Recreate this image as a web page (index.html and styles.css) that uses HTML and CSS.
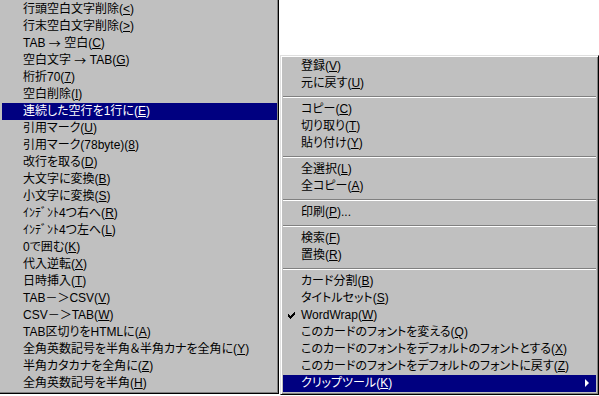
FILE: index.html
```html
<!DOCTYPE html>
<html lang="ja">

<head>
  <meta charset="UTF-8" />
  <title>Menu</title>
  <link rel="stylesheet" href="styles.css">
</head>

<body>
  <div class="desk">
    <!-- Submenu: text tools -->
    <ul class="menu menu-sub">
      <li class="item">行頭空白文字削除(<u>&lt;</u>)</li>
      <li class="item">行末空白文字削除(<u>&gt;</u>)</li>
      <li class="item">TAB&nbsp;<span class="sym">→</span>&nbsp;空白(<u>C</u>)</li>
      <li class="item">空白文字&nbsp;<span class="sym">→</span>&nbsp;TAB(<u>G</u>)</li>
      <li class="item">桁折70(<u>7</u>)</li>
      <li class="item">空白削除(<u>I</u>)</li>
      <li class="item active">連続した空行を1行に(<u>E</u>)</li>
      <li class="item">引用マーク(<u>U</u>)</li>
      <li class="item">引用マーク(78byte)(<u>8</u>)</li>
      <li class="item">改行を取る(<u>D</u>)</li>
      <li class="item">大文字に変換(<u>B</u>)</li>
      <li class="item">小文字に変換(<u>S</u>)</li>
      <li class="item">ｲﾝﾃﾞﾝﾄ4つ右へ(<u>R</u>)</li>
      <li class="item">ｲﾝﾃﾞﾝﾄ4つ左へ(<u>L</u>)</li>
      <li class="item">0で囲む(<u>K</u>)</li>
      <li class="item">代入逆転(<u>X</u>)</li>
      <li class="item">日時挿入(<u>T</u>)</li>
      <li class="item">TAB－＞CSV(<u>V</u>)</li>
      <li class="item">CSV－＞TAB(<u>W</u>)</li>
      <li class="item">TAB区切りをHTMLに(<u>A</u>)</li>
      <li class="item">全角英数記号を半角＆半角カナを全角に(<u>Y</u>)</li>
      <li class="item">半角カタカナを全角に(<u>Z</u>)</li>
      <li class="item">全角英数記号を半角(<u>H</u>)</li>
    </ul>

    <!-- Context menu -->
    <ul class="menu menu-main">
      <li class="item">登録(<u>V</u>)</li>
      <li class="item">元に戻す(<u>U</u>)</li>
      <li class="sep"></li>
      <li class="item">コピー(<u>C</u>)</li>
      <li class="item">切り取り(<u>T</u>)</li>
      <li class="item">貼り付け(<u>Y</u>)</li>
      <li class="sep"></li>
      <li class="item">全選択(<u>L</u>)</li>
      <li class="item">全コピー(<u>A</u>)</li>
      <li class="sep"></li>
      <li class="item">印刷(<u>P</u>)...</li>
      <li class="sep"></li>
      <li class="item">検索(<u>F</u>)</li>
      <li class="item">置換(<u>R</u>)</li>
      <li class="sep"></li>
      <li class="item">カード分割(<u>B</u>)</li>
      <li class="item">タイトルセット(<u>S</u>)</li>
      <li class="item checked">
        <svg class="check" width="7" height="7" viewBox="0 0 7 7">
          <path d="M0 2h1v1h1v1h1v-1h1v-1h1v-1h1v-1h1v3h-1v1h-1v1h-1v1h-1v1h-1v-1h-1v-1h-1z" fill="#000" />
        </svg>
        WordWrap(<u>W</u>)
      </li>
      <li class="item">このカードのフォントを変える(<u>Q</u>)</li>
      <li class="item">このカードのフォントをデフォルトのフォントとする(<u>X</u>)</li>
      <li class="item">このカードのフォントをデフォルトのフォントに戻す(<u>Z</u>)</li>
      <li class="item active has-sub">クリップツール(<u>K</u>)<span class="arrow"></span></li>
    </ul>
  </div>
</body>

</html>
```

FILE: styles.css
```css
* {
  margin: 0;
  padding: 0;
  box-sizing: border-box;
}

body {
  background-color: #fff;
  font-family: "Liberation Sans", "Noto Sans CJK JP", sans-serif;
  font-size: 12px;
  color: #000;
  height: 396px;
  overflow: hidden;
}

.desk {
  display: flex;
  align-items: flex-start;
  gap: 1px;
}

/* Menus */
.menu {
  list-style: none;
  background-color: #c0c0c0;
  font-feature-settings: "palt";
}

.menu-sub {
  width: 279px;
  padding: 1px 1px 1px 2px;
  border-right: 1px solid #000;
  border-bottom: 1px solid #000;
  box-shadow: inset -1px -1px 0 #808080;
}

.menu-main {
  width: 319px;
  margin-top: 55px;
  padding: 2px;
  border-top: 1px solid #dfdfdf;
  border-left: 1px solid #dfdfdf;
  border-right: 1px solid #000;
  border-bottom: 1px solid #000;
  box-shadow: inset 1px 1px 0 #fff, inset -1px -1px 0 #808080;
}

.item {
  height: 17px;
  line-height: 17px;
  white-space: nowrap;
  display: flex;
  align-items: center;
  position: relative;
}

.menu-sub .item {
  padding-left: 21px;
}

.menu-main .item {
  padding-left: 18px;
}

.item u {
  text-underline-offset: 1px;
}

.sym {
  font-family: "Noto Sans CJK JP", sans-serif;
}

.item.active {
  background-color: #000080;
  color: #fff;
}

.sep {
  height: 9px;
  padding-top: 4px;
}

.sep::before {
  content: "";
  display: block;
  border-top: 1px solid #808080;
  border-bottom: 1px solid #fff;
}

.check {
  position: absolute;
  left: 5px;
  top: 5px;
}

.arrow {
  position: absolute;
  right: 7px;
  top: 4px;
  border-top: 4px solid transparent;
  border-bottom: 4px solid transparent;
  border-left: 4px solid #fff;
}
```
